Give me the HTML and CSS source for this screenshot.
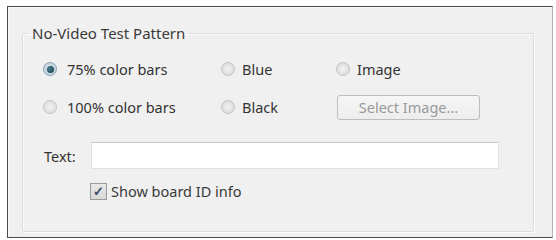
FILE: index.html
```html
<!DOCTYPE html>
<html>
<head>
<meta charset="utf-8">
<link rel="stylesheet" href="styles.css">
</head>
<body>
<div class="frame">
  <fieldset class="group">
    <legend class="legend">No-Video Test Pattern</legend>
    <div class="options">
      <label class="opt first"><span class="radio checked"></span>75% color bars</label>
      <label class="opt"><span class="radio"></span>Blue</label>
      <label class="opt"><span class="radio"></span>Image</label>
      <label class="opt first"><span class="radio"></span>100% color bars</label>
      <label class="opt"><span class="radio"></span>Black</label>
      <div class="btn">Select Image...</div>
    </div>
    <div class="textrow">
      <span class="lbl">Text:</span>
      <div class="input"></div>
    </div>
    <label class="chkrow"><span class="check">&#10003;</span>Show board ID info</label>
  </fieldset>
</div>
</body>
</html>
```
FILE: styles.css
```css
html, body { margin: 0; padding: 0; background: #fff; }
body {
  width: 556px; height: 240px; overflow: hidden;
  font-family: "Noto Sans", "Open Sans", sans-serif;
  font-size: 14.5px; color: #333;
}
.frame {
  box-sizing: border-box;
  margin: 6px 3px 0 7px;
  width: 546px; height: 232px;
  background: #f0f0f0;
  border: 1px solid #4a4a4a;
  border-right-color: #b5b5b5;
  box-shadow: inset 1px 1px 0 #fafafa;
  padding: 19px 19px 0 14px;
}
.group {
  box-sizing: border-box;
  margin: 0; width: 512px; height: 206px;
  border: 1px solid #dcdcdc;
  border-radius: 2px;
  box-shadow: inset 1px 1px 0 #fbfbfb, 1px 1px 0 #fbfbfb;
  padding: 16px 0 0 4px;
}
.legend { padding: 0 4px 0 5px; color: #3a3a3a; line-height: 14px; font-size: 15px; }
.options {
  display: grid;
  grid-template-columns: 180px 115px 150px;
  grid-auto-rows: 26px;
  row-gap: 12px;
  align-items: center;
  margin-left: 14px;
}
.opt { display: flex; align-items: center; gap: 7px; white-space: nowrap; }
.opt.first { gap: 10px; margin-left: 2px; }
.radio {
  box-sizing: border-box;
  width: 14px; height: 14px; border-radius: 50%;
  border: 1px solid #c4c4c4;
  background: radial-gradient(circle at 50% 50%, #f2f2f2 0, #e2e2e2 55%, #d6d6d6 100%);
  display: flex; align-items: center; justify-content: center;
}
.radio.checked { border-color: #8aa3b2; background: radial-gradient(circle, #dfe8ee 0, #b8c9d4 100%); }
.radio.checked::after {
  content: ""; width: 7px; height: 7px; border-radius: 50%;
  background: radial-gradient(circle at 40% 40%, #4a8494 0, #1d4a5a 70%);
}
.btn {
  box-sizing: border-box;
  width: 143px; height: 25px;
  border: 1px solid #bdbdbd; border-radius: 3px;
  background: linear-gradient(#f6f6f6, #ededed);
  color: #9a9a9a;
  display: flex; align-items: center; justify-content: center;
  margin-left: 1px;
}
.textrow {
  display: flex; align-items: center;
  margin-top: 22px; margin-left: 17px;
}
.lbl { width: 47px; color: #333; }
.input {
  box-sizing: border-box;
  width: 408px; height: 27px;
  background: #fff;
  border: 1px solid #e2e2e2; border-top-color: #c6c6c6;
}
.chkrow {
  display: flex; align-items: center; gap: 4px;
  margin-top: 13px; margin-left: 63px; height: 18px;
  color: #3a3a3a;
}
.check {
  box-sizing: border-box;
  width: 17px; height: 17px;
  border: 1px solid #9a9a9a;
  background: linear-gradient(#e8e8e8, #d8d8d8);
  color: #3e4f66; font-size: 13px; font-weight: bold;
  display: flex; align-items: center; justify-content: center;
  line-height: 1;
}
```
